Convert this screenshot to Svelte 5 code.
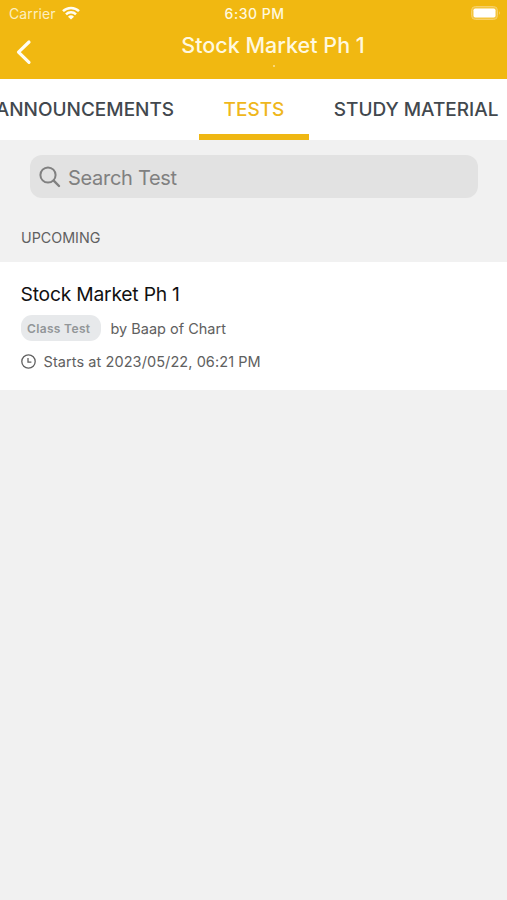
<script>
  let title = "Stock Market Ph 1";
  let active = "TESTS";
  let search = "";
  const tabs = ["ANNOUNCEMENTS", "TESTS", "STUDY MATERIAL"];
  const tests = [
    {
      name: "Stock Market Ph 1",
      type: "Class Test",
      author: "Baap of Chart",
      start: "2023/05/22, 06:21 PM"
    }
  ];
</script>

<style>
  :global(body) {
    background-color: #f1f1f1;
    overflow: hidden;
  }

  .screen {
    width: 507px;
    height: 900px;
    overflow: hidden;
    background-color: #f1f1f1;
    font-family: Inter, "Liberation Sans", sans-serif;
  }

  svg {
    display: block;
    flex: none;
  }

  header {
    height: 79px;
    background-color: #f1b811;
    color: #fff8df;
  }

  .status {
    display: grid;
    grid-template-columns: 1fr auto 1fr;
    align-items: center;
    height: 26px;
    padding: 0 6px 0 9px;
    box-sizing: border-box;
    font-size: 14px;
  }

  .carrier {
    display: flex;
    align-items: center;
    gap: 6px;
    letter-spacing: 0.1px;
  }

  .carrier span {
    opacity: 0.85;
  }

  .time {
    margin-right: 1px;
    font-weight: 500;
    letter-spacing: 0.5px;
  }

  .battery {
    justify-self: end;
  }

  .bar {
    display: grid;
    grid-template-columns: 39px 1fr;
    height: 53px;
  }

  .back {
    display: block;
    height: 30px;
    margin: 11px 0 0 14px;
    padding: 0;
    border: 0;
    background: none;
    color: #fffdf3;
  }

  .heading {
    display: flex;
    flex-direction: column;
    align-items: center;
  }

  h1 {
    margin: 5px 0 0;
    font-size: 21.5px;
    font-weight: 500;
    line-height: 28px;
    letter-spacing: 0.02px;
  }

  .dot {
    width: 2px;
    height: 2px;
    margin: 6px 0 0 1px;
    border-radius: 1px;
    background-color: #fbe29a;
  }

  nav {
    display: flex;
    height: 61px;
    margin-left: -29px;
    background-color: #fff;
  }

  .tab {
    flex: none;
    box-sizing: border-box;
    height: 61px;
    padding: 6px 24.7px 0;
    border: 0;
    border-bottom: 6px solid transparent;
    background: none;
    color: #42484e;
    font-family: inherit;
    font-size: 19px;
    font-weight: 500;
    line-height: 49px;
    white-space: nowrap;
  }

  .tab.active {
    color: #efb71c;
    border-bottom-color: #efb713;
  }

  .search {
    display: flex;
    align-items: center;
    gap: 7px;
    height: 43px;
    margin: 15px 29px 0 30px;
    padding-left: 9px;
    border-radius: 12px;
    background-color: #e2e2e2;
    color: #808080;
  }

  .search input {
    flex: 1;
    padding: 2px 0 0;
    border: 0;
    outline: 0;
    background: none;
    font-family: inherit;
    font-size: 20px;
    letter-spacing: -0.3px;
    color: #808080;
  }

  .search input::placeholder {
    color: #808080;
    opacity: 1;
  }

  h2 {
    margin: 0;
    padding: 30px 21px 14px;
    color: #606060;
    font-size: 14.3px;
    font-weight: 400;
    line-height: 20px;
  }

  .test {
    height: 128px;
    padding: 18px 20.5px 0;
    box-sizing: border-box;
    background-color: #fff;
    color: #606060;
    font-size: 14.5px;
  }

  h3 {
    margin: 0;
    color: #111;
    font-size: 19.3px;
    font-weight: 400;
    line-height: 28px;
    letter-spacing: -0.22px;
  }

  .meta {
    display: flex;
    align-items: center;
    gap: 10px;
    height: 26px;
    margin-top: 7px;
  }

  .badge {
    width: 80px;
    height: 26px;
    box-sizing: border-box;
    padding: 1px 0 0 6.5px;
    border-radius: 11px;
    background-color: #e7e9eb;
    color: #929698;
    font-size: 12px;
    font-weight: 600;
    line-height: 26px;
    letter-spacing: 0.34px;
    white-space: nowrap;
  }

  .start {
    display: flex;
    align-items: center;
    gap: 8px;
    height: 20px;
    margin-top: 10px;
    letter-spacing: 0.08px;
  }
</style>

<div class="screen">
  <header>
    <div class="status">
      <div class="carrier">
        <span>Carrier</span>
        <svg width="18" height="14" viewBox="0 0 18 14" fill="none" stroke="#fffdf3" stroke-width="2.5">
          <path d="M1 5.2a11.4 11.4 0 0 1 16 0M4 8.4a7.1 7.1 0 0 1 10 0" />
          <path d="M9 13.6 6 10.7a4.3 4.3 0 0 1 6 0Z" fill="#fffdf3" stroke="none" />
        </svg>
      </div>
      <div class="time">6:30 PM</div>
      <svg class="battery" width="30" height="14" viewBox="0 0 30 14">
        <rect x="0.5" y="0.5" width="26" height="13" rx="4" fill="#f4c53e" stroke="#f6d069" />
        <rect x="2.5" y="2.5" width="22" height="9" rx="1.8" fill="#fff" />
        <path d="M28 5q1.6 2 0 4Z" fill="#f8da84" />
      </svg>
    </div>
    <div class="bar">
      <button class="back" aria-label="Back">
        <svg width="18" height="28" viewBox="0 0 18 28" fill="none" stroke="currentColor" stroke-width="3.2" stroke-linecap="round" stroke-linejoin="round">
          <path d="M15 4 4.5 14.2 15 24.4" />
        </svg>
      </button>
      <div class="heading">
        <h1>{title}</h1>
        <div class="dot"></div>
      </div>
    </div>
  </header>

  <nav>
    {#each tabs as tab}
      <button class="tab" class:active={active === tab} on:click={() => (active = tab)}>{tab}</button>
    {/each}
  </nav>

  <div class="search">
    <svg width="22" height="22" viewBox="0 0 22 22" fill="none" stroke="currentColor" stroke-width="2" stroke-linecap="round">
      <circle cx="9" cy="9" r="7.6" />
      <path d="m14.7 14.7 5.3 5.3" stroke-width="2.4" />
    </svg>
    <input placeholder="Search Test" bind:value={search} />
  </div>

  <h2>UPCOMING</h2>

  {#each tests as test}
    <div class="test">
      <h3>{test.name}</h3>
      <div class="meta">
        <span class="badge">{test.type}</span>
        <span class="author">by {test.author}</span>
      </div>
      <div class="start">
        <svg width="15" height="15" viewBox="0 0 15 15" fill="none" stroke="currentColor" stroke-width="1.3">
          <circle cx="7.5" cy="7.5" r="6.7" />
          <path d="M7 4v4.2h3.4" />
        </svg>
        <span>Starts at {test.start}</span>
      </div>
    </div>
  {/each}
</div>
